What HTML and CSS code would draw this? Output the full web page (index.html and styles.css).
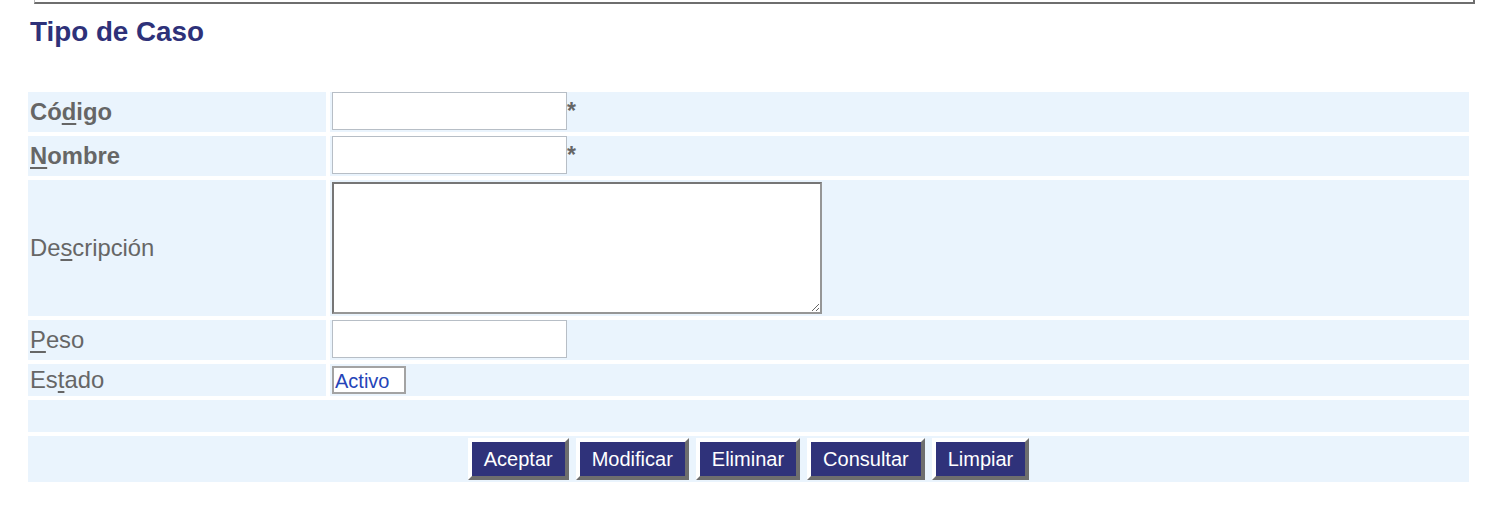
FILE: index.html
```html
<!DOCTYPE html>
<html lang="es">
<head>
<meta charset="utf-8">
<title>Tipo de Caso</title>
<link rel="stylesheet" href="styles.css">
</head>
<body>
<div class="frame-edge"></div>
<h1 class="page-title">Tipo de Caso</h1>
<form class="form-grid">
  <div class="label bold">Có<u>d</u>igo</div>
  <div class="field"><input class="text-input" type="text"><span class="required">*</span></div>

  <div class="label bold"><u>N</u>ombre</div>
  <div class="field"><input class="text-input" type="text"><span class="required">*</span></div>

  <div class="label">De<u>s</u>cripción</div>
  <div class="field field-tall"><textarea class="text-area"></textarea></div>

  <div class="label"><u>P</u>eso</div>
  <div class="field"><input class="text-input" type="text"></div>

  <div class="label">Es<u>t</u>ado</div>
  <div class="field field-select"><div class="select-box">Activo</div></div>

  <div class="spacer-row"></div>

  <div class="button-row">
    <button type="button" class="btn">Aceptar</button>
    <button type="button" class="btn">Modificar</button>
    <button type="button" class="btn">Eliminar</button>
    <button type="button" class="btn">Consultar</button>
    <button type="button" class="btn">Limpiar</button>
  </div>
</form>
</body>
</html>
```

FILE: styles.css
```css
html, body {
  margin: 0;
  padding: 0;
  background: #ffffff;
}

body {
  font-family: "Liberation Sans", Arial, Helvetica, sans-serif;
  color: #666666;
}

.frame-edge {
  height: 2px;
  margin: 0 23px 0 34px;
  border-left: 1px solid #b8b8b8;
  border-bottom: 2px solid #6e6e6e;
  border-right: 2px solid #6e6e6e;
}

.page-title {
  margin: 12px 0 0 30px;
  font-size: 27.8px;
  line-height: 31px;
  font-weight: bold;
  color: #2e3179;
}

.form-grid {
  margin: 45px 0 0 28px;
  width: 1441px;
  display: grid;
  grid-template-columns: 298px 1fr;
  gap: 4px;
}

.label {
  background: #eaf4fd;
  display: flex;
  align-items: center;
  padding-left: 2px;
  font-size: 23.8px;
  color: #666666;
}

.label.bold {
  font-weight: bold;
}

.label u {
  text-decoration: underline;
  text-underline-offset: 3px;
}

.field {
  background: #eaf4fd;
  display: flex;
  align-items: flex-start;
  padding: 0 2px 2px 2px;
}

.field-tall {
  padding-top: 2px;
}

.field-select {
  padding-top: 2px;
}

.text-input {
  box-sizing: border-box;
  width: 235px;
  height: 38px;
  margin: 0;
  border: 1px solid #b7bec6;
  background: #ffffff;
  font: 20px "Liberation Sans", Arial, sans-serif;
  padding: 0 3px;
}

.required {
  font-weight: bold;
  font-size: 23px;
  line-height: 26px;
  margin-top: 6px;
  color: #666666;
}

.text-area {
  box-sizing: border-box;
  width: 490px;
  height: 132px;
  margin: 0;
  border: 2px solid;
  border-color: #767676 #969696 #969696 #767676;
  background: #ffffff;
  font: 20px "Liberation Sans", Arial, sans-serif;
}

.select-box {
  box-sizing: border-box;
  width: 74px;
  height: 28px;
  border: 2px solid #a3a3a3;
  background: #ffffff;
  color: #2544b8;
  font-size: 20px;
  line-height: 26px;
  padding-left: 1px;
}

.spacer-row {
  grid-column: 1 / -1;
  height: 32px;
  background: #eaf4fd;
}

.button-row {
  grid-column: 1 / -1;
  background: #eaf4fd;
  display: flex;
  justify-content: center;
  gap: 7px;
  padding: 2px 0;
}

.btn {
  box-sizing: border-box;
  height: 42px;
  margin: 0;
  padding: 0 12px;
  border: 4px solid;
  border-color: #ffffff #6e6e6e #6e6e6e #ffffff;
  background: #2f327a;
  color: #ffffff;
  font: 20px "Liberation Sans", Arial, Helvetica, sans-serif;
  cursor: pointer;
}
```
